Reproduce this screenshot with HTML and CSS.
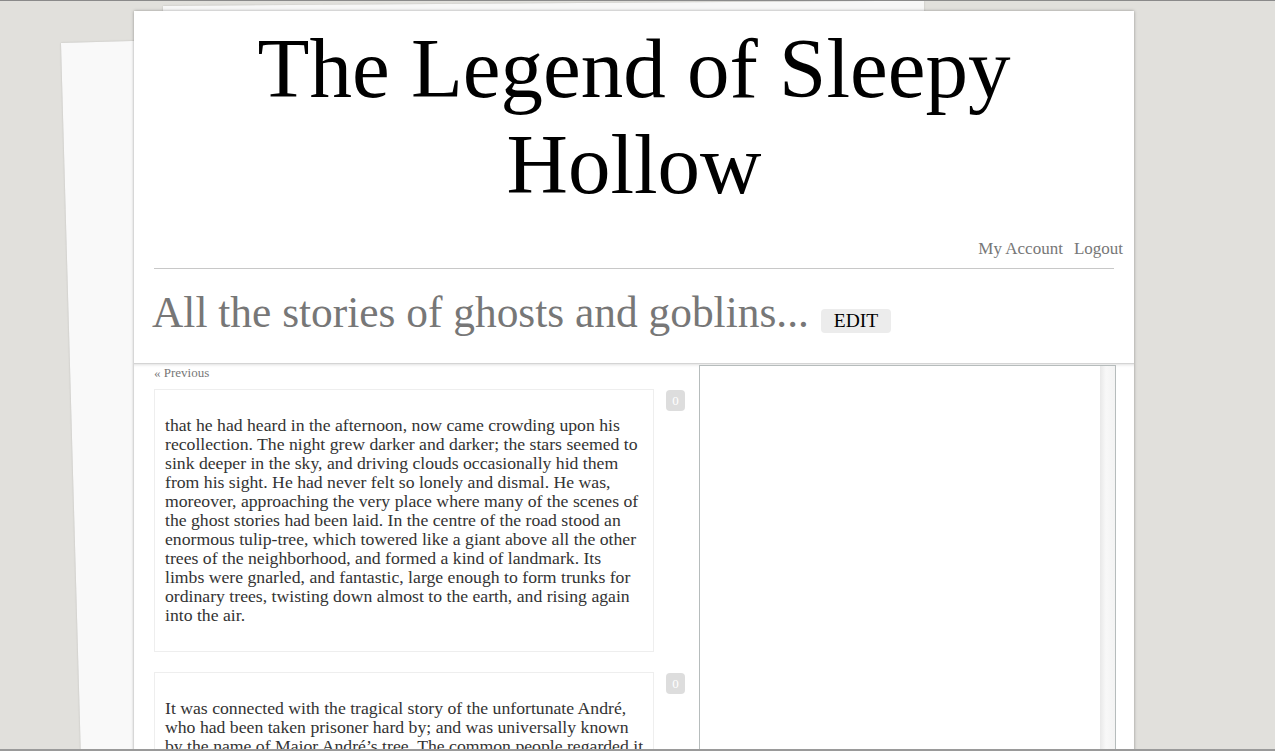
FILE: index.html
```html
<!DOCTYPE html>
<html lang="en">
<head>
<meta charset="utf-8">
<title>The Legend of Sleepy Hollow</title>
<link rel="stylesheet" href="styles.css">
</head>
<body>
<div class="paper paper-left"></div>
<div class="paper paper-top"></div>
<div class="page">
  <header class="masthead">
    <h1 class="title">The Legend of Sleepy Hollow</h1>
    <nav class="account">
      <a href="#">My Account</a>
      <a href="#">Logout</a>
    </nav>
  </header>
  <div class="rule"></div>
  <section class="chapter-head">
    <h2 class="chapter-title">All the stories of ghosts and goblins...</h2>
    <button class="edit" type="button">EDIT</button>
  </section>
  <div class="content">
    <div class="reader">
      <a class="prev" href="#">« Previous</a>
      <div class="passage">
        <div class="passage-box">
          <p>that he had heard in the afternoon, now came crowding upon his<br>recollection. The night grew darker and darker; the stars seemed to<br>sink deeper in the sky, and driving clouds occasionally hid them<br>from his sight. He had never felt so lonely and dismal. He was,<br>moreover, approaching the very place where many of the scenes of<br>the ghost stories had been laid. In the centre of the road stood an<br>enormous tulip-tree, which towered like a giant above all the other<br>trees of the neighborhood, and formed a kind of landmark. Its<br>limbs were gnarled, and fantastic, large enough to form trunks for<br>ordinary trees, twisting down almost to the earth, and rising again<br>into the air.</p>
        </div>
        <span class="count">0</span>
      </div>
      <div class="passage">
        <div class="passage-box">
          <p>It was connected with the tragical story of the unfortunate André,<br>who had been taken prisoner hard by; and was universally known<br>by the name of Major André’s tree. The common people regarded it<br>with a mixture of respect and superstition, partly out of sympathy<br>for the fate of its ill-starred namesake, and partly from the tales<br>of strange sights, and doleful lamentations, told concerning it.</p>
        </div>
        <span class="count">0</span>
      </div>
    </div>
    <aside class="notes">
      <div class="track"></div>
    </aside>
  </div>
</div>
<div class="window-edge"></div>
</body>
</html>
```

FILE: styles.css
```css
* {
  box-sizing: border-box;
}

html,
body {
  margin: 0;
  height: 100%;
}

body {
  position: relative;
  overflow: hidden;
  background: #e1e0dc;
  border-top: 1px solid #8a8a8a;
  font-family: "Liberation Serif", "Times New Roman", serif;
}

.paper {
  position: absolute;
  background: #f9f9f9;
  box-shadow: 0 0 2px rgba(0, 0, 0, 0.18);
  transform-origin: 0 0;
}

.paper-left {
  left: 61px;
  top: 42px;
  width: 900px;
  height: 800px;
  transform: rotate(-1.6deg);
}

.paper-top {
  left: 163px;
  top: 5px;
  width: 761px;
  height: 600px;
  transform: rotate(-0.4deg);
  background: #f7f7f7;
}

.page {
  position: relative;
  z-index: 1;
  width: 1000px;
  height: 760px;
  margin: 10px 0 0 134px;
  background: #fff;
  box-shadow: 0 0 3px rgba(0, 0, 0, 0.35);
}

.masthead {
  display: flex;
  flex-direction: column;
  height: 257px;
  padding-top: 9px;
  padding-bottom: 9px;
}

.title {
  margin: 0;
  padding: 0 80px;
  font-size: 85px;
  line-height: 96px;
  font-weight: normal;
  text-align: center;
  color: #000;
}

.account {
  display: flex;
  justify-content: flex-end;
  gap: 11px;
  margin-top: auto;
  padding-right: 11px;
  font-size: 17px;
  line-height: 20px;
}

.account a {
  color: #777;
  text-decoration: none;
}

.rule {
  height: 1px;
  margin: 0 20px;
  background: #c8c8c8;
}

.chapter-head {
  display: flex;
  align-items: baseline;
  height: 94px;
  padding: 21px 0 0 18px;
}

.chapter-title {
  margin: 0;
  font-size: 43.4px;
  line-height: 44px;
  font-weight: normal;
  color: #777;
}

.edit {
  margin-left: 12px;
  padding: 3px 13px;
  border: 0;
  border-radius: 4px;
  background: #ececec;
  font-family: "Liberation Serif", "Times New Roman", serif;
  font-size: 19.5px;
  line-height: 18px;
  color: #000;
}

.content {
  display: flex;
  height: 400px;
  border-top: 1px solid #d4d4d4;
  box-shadow: inset 0 3px 3px -2px rgba(0, 0, 0, 0.12);
}

.reader {
  width: 565px;
  padding-left: 20px;
}

.prev {
  display: block;
  margin-top: 1px;
  margin-bottom: 9px;
  font-size: 13px;
  line-height: 15px;
  color: #777;
  text-decoration: none;
}

.passage {
  display: flex;
  align-items: flex-start;
  gap: 12px;
  margin-bottom: 20px;
}

.passage-box {
  width: 500px;
  padding: 26px 10px 26px 10px;
  border: 1px solid #eee;
}

.passage-box p {
  margin: 0;
  font-size: 17.7px;
  line-height: 19px;
  color: #333;
  white-space: nowrap;
}

.count {
  width: 19px;
  height: 21px;
  margin-top: 1px;
  border-radius: 4px;
  background: #ddd;
  color: #fff;
  font-size: 13px;
  line-height: 21px;
  text-align: center;
}

.notes {
  display: flex;
  justify-content: flex-end;
  width: 417px;
  margin-top: 1px;
  border: 1px solid #b6bcbc;
  border-bottom: 0;
  background: #fff;
}

.track {
  width: 15px;
  background: linear-gradient(to right, #e8e8e8, #f8f8f8 40%, #f3f3f3);
}

.window-edge {
  position: fixed;
  left: 0;
  right: 0;
  bottom: 0;
  z-index: 5;
  height: 2px;
  background: #9a9a9a;
}
```
